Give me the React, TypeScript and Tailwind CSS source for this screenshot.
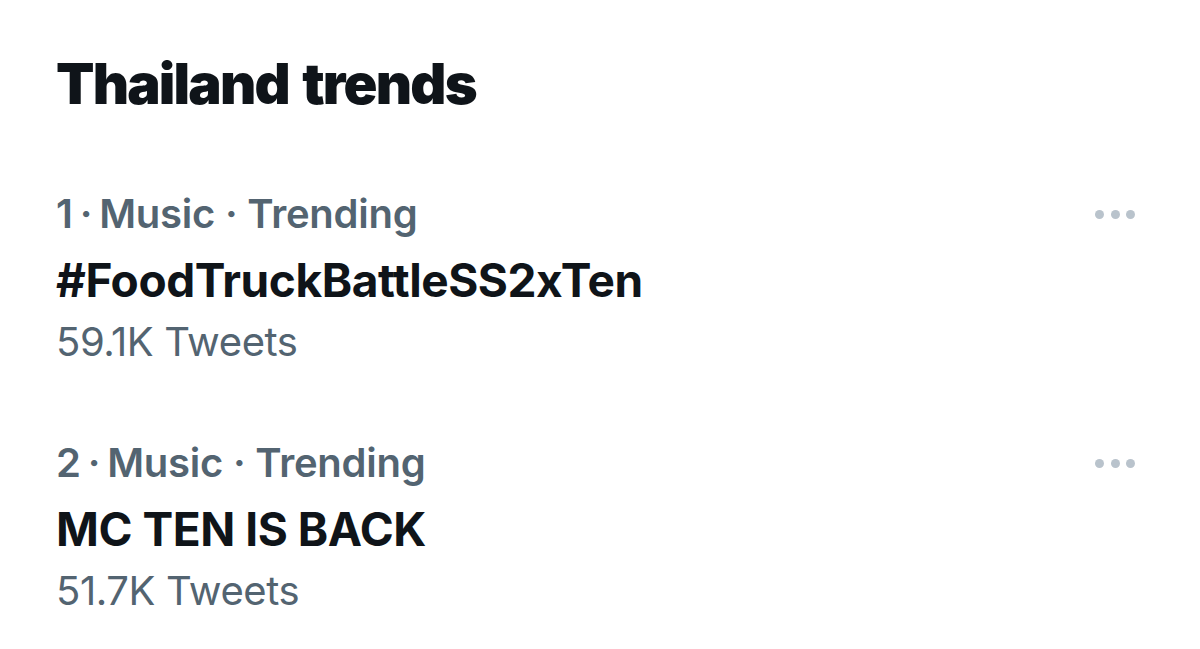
const trends = [
  { rank: 1, category: 'Music', name: '#FoodTruckBattleSS2xTen', count: '59.1K' },
  { rank: 2, category: 'Music', name: 'MC TEN IS BACK', count: '51.7K' },
];

const MoreDots = () => (
  <div className="flex items-center gap-[6.5px] pr-[1px]">
    <span className="block h-[9px] w-[9px] rounded-full bg-[#b9c3cc]" />
    <span className="block h-[9px] w-[9px] rounded-full bg-[#b9c3cc]" />
    <span className="block h-[9px] w-[9px] rounded-full bg-[#b9c3cc]" />
  </div>
);

export default function App() {
  return (
    <div className="h-[649px] w-[1200px] overflow-hidden bg-white pl-[56px] pr-[64px] pt-[56px] font-['Inter',sans-serif] antialiased">
      <h1 className="text-[56px] font-black leading-[56px] tracking-[-1.8px] [word-spacing:4px] text-[#0f1419]">Thailand trends</h1>
      <div className="mt-[78px] flex flex-col gap-[73px]">
        {trends.map((trend) => (
          <div key={trend.rank} className="flex items-start justify-between">
            <div className="flex flex-col">
              <div className="text-[40px] font-semibold leading-[48px] tracking-[-0.25px] text-[#536471]">
                {trend.rank}<span className="px-[7px]">·</span>{trend.category} · Trending
              </div>
              <div className="mt-[14px] text-[46px] font-bold leading-[56px] tracking-[-0.45px] text-[#0f1419]">{trend.name}</div>
              <div className="mt-[10px] text-[40px] font-normal leading-[48px] tracking-[-0.4px] text-[#536471]">{trend.count} Tweets</div>
            </div>
            <div className="flex h-[48px] items-center">
              <MoreDots />
            </div>
          </div>
        ))}
      </div>
    </div>
  );
}
